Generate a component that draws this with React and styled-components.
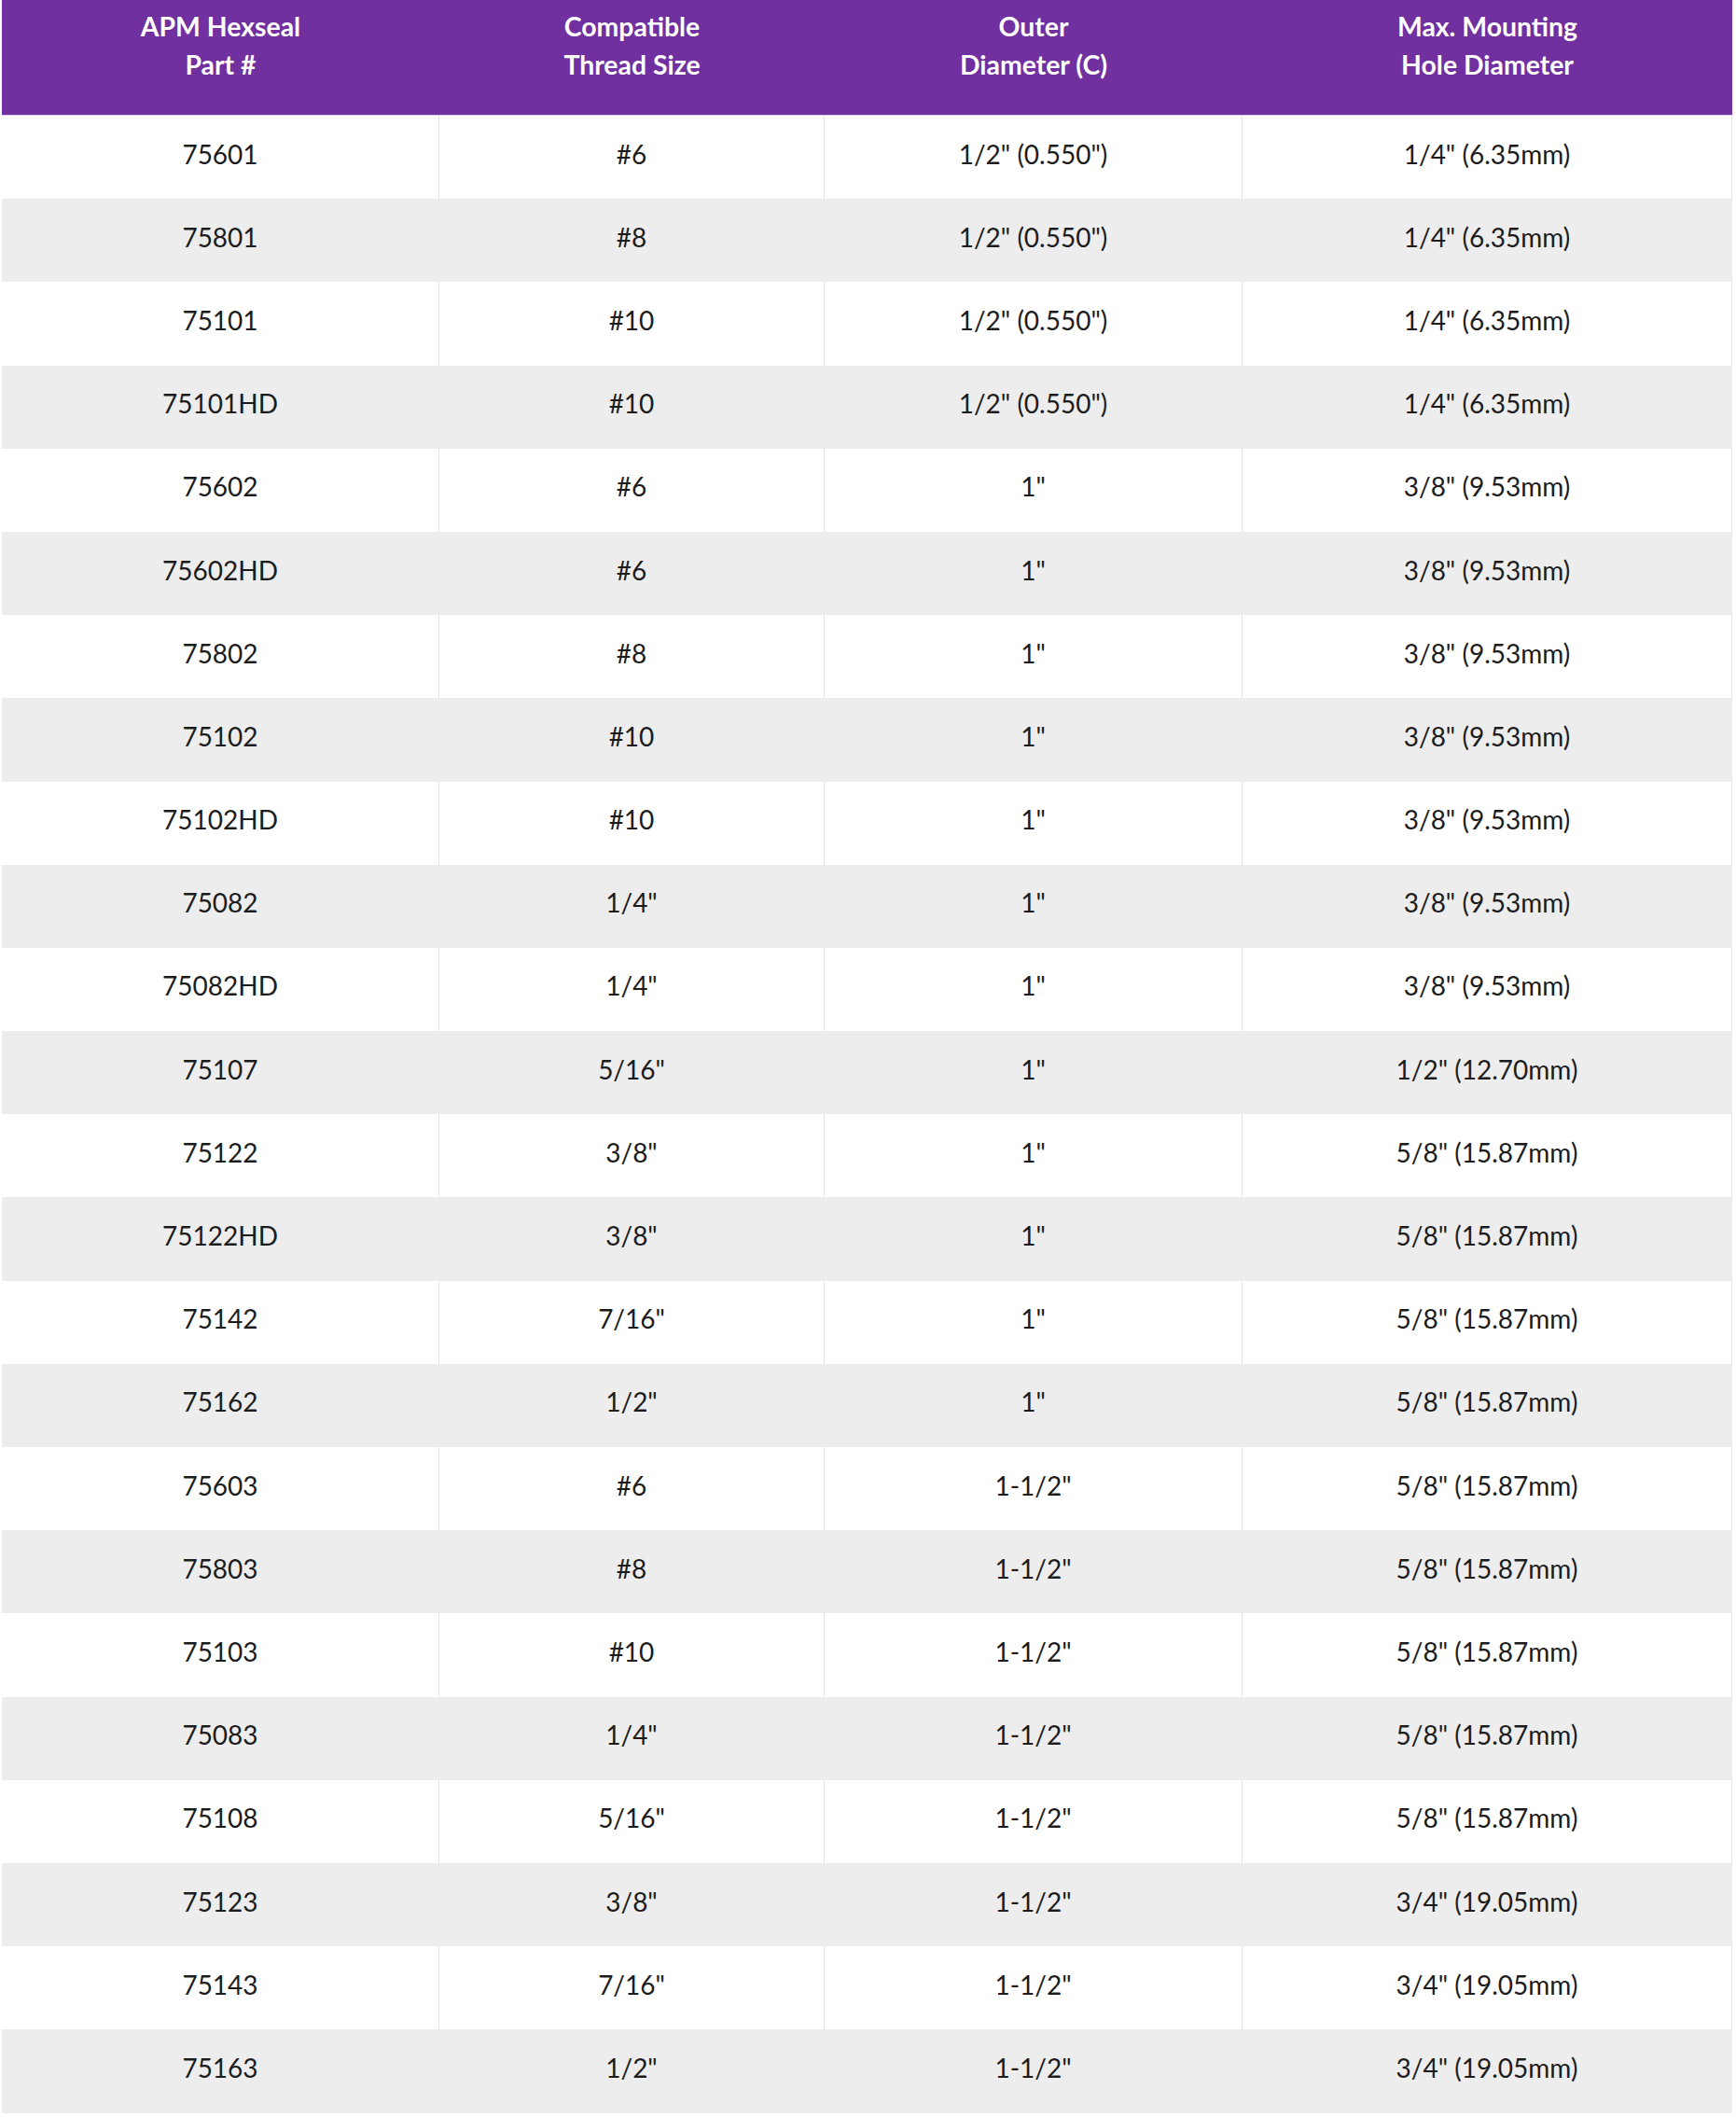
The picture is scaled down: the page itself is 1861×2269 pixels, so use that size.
import React from "react";
import styled, { createGlobalStyle } from "styled-components";

const Global = createGlobalStyle`
  html, body { margin: 0; padding: 0; background: #ffffff; }
  body { font-family: Lato, "Open Sans", "Liberation Sans", sans-serif; }
`;

const COLS = "469px 413px 448px 525px";

const Page = styled.div`
  padding: 0 0 0 2px;
`;

const Table = styled.div`
  width: 1855px;
  display: flex;
  flex-direction: column;
`;

const HeadRow = styled.div`
  display: grid;
  grid-template-columns: ${COLS};
  height: 124px;
  background: #7030a0;
  border-bottom: 1px solid #d8d0e2;
  box-sizing: border-box;
`;

const HeadCell = styled.div`
  display: flex;
  flex-direction: column;
  align-items: center;
  padding-top: 8px;
  color: #ffffff;
  font-weight: 700;
  font-size: 28.4px;
  line-height: 41px;
  text-align: center;
`;

const Row = styled.div`
  display: grid;
  grid-template-columns: ${COLS};
  height: 89.2px;
  background: ${(p) => (p.$alt ? "#ededed" : "#ffffff")};
`;

const Cell = styled.div`
  display: flex;
  align-items: center;
  justify-content: center;
  padding-bottom: 8px;
  box-sizing: border-box;
  font-size: 28px;
  color: #1c1c1c;
  border-right: 1px solid ${(p) => (p.$alt ? "#ededed" : "#e4e4e4")};
`;

const headers = [
  ["APM Hexseal", "Part #"],
  ["Compatible", "Thread Size"],
  ["Outer", "Diameter (C)"],
  ["Max. Mounting", "Hole Diameter"],
];

const rows = [
  ["75601", "#6", '1/2" (0.550")', '1/4" (6.35mm)'],
  ["75801", "#8", '1/2" (0.550")', '1/4" (6.35mm)'],
  ["75101", "#10", '1/2" (0.550")', '1/4" (6.35mm)'],
  ["75101HD", "#10", '1/2" (0.550")', '1/4" (6.35mm)'],
  ["75602", "#6", '1"', '3/8" (9.53mm)'],
  ["75602HD", "#6", '1"', '3/8" (9.53mm)'],
  ["75802", "#8", '1"', '3/8" (9.53mm)'],
  ["75102", "#10", '1"', '3/8" (9.53mm)'],
  ["75102HD", "#10", '1"', '3/8" (9.53mm)'],
  ["75082", '1/4"', '1"', '3/8" (9.53mm)'],
  ["75082HD", '1/4"', '1"', '3/8" (9.53mm)'],
  ["75107", '5/16"', '1"', '1/2" (12.70mm)'],
  ["75122", '3/8"', '1"', '5/8" (15.87mm)'],
  ["75122HD", '3/8"', '1"', '5/8" (15.87mm)'],
  ["75142", '7/16"', '1"', '5/8" (15.87mm)'],
  ["75162", '1/2"', '1"', '5/8" (15.87mm)'],
  ["75603", "#6", '1-1/2"', '5/8" (15.87mm)'],
  ["75803", "#8", '1-1/2"', '5/8" (15.87mm)'],
  ["75103", "#10", '1-1/2"', '5/8" (15.87mm)'],
  ["75083", '1/4"', '1-1/2"', '5/8" (15.87mm)'],
  ["75108", '5/16"', '1-1/2"', '5/8" (15.87mm)'],
  ["75123", '3/8"', '1-1/2"', '3/4" (19.05mm)'],
  ["75143", '7/16"', '1-1/2"', '3/4" (19.05mm)'],
  ["75163", '1/2"', '1-1/2"', '3/4" (19.05mm)'],
];

export default function App() {
  return (
    <>
      <Global />
      <Page>
        <Table>
          <HeadRow>
            {headers.map((h, i) => (
              <HeadCell key={i}>
                <span>{h[0]}</span>
                <span>{h[1]}</span>
              </HeadCell>
            ))}
          </HeadRow>
          {rows.map((r, i) => (
            <Row key={i} $alt={i % 2 === 1}>
              {r.map((c, j) => (
                <Cell key={j} $alt={i % 2 === 1}>
                  {c}
                </Cell>
              ))}
            </Row>
          ))}
        </Table>
      </Page>
    </>
  );
}
